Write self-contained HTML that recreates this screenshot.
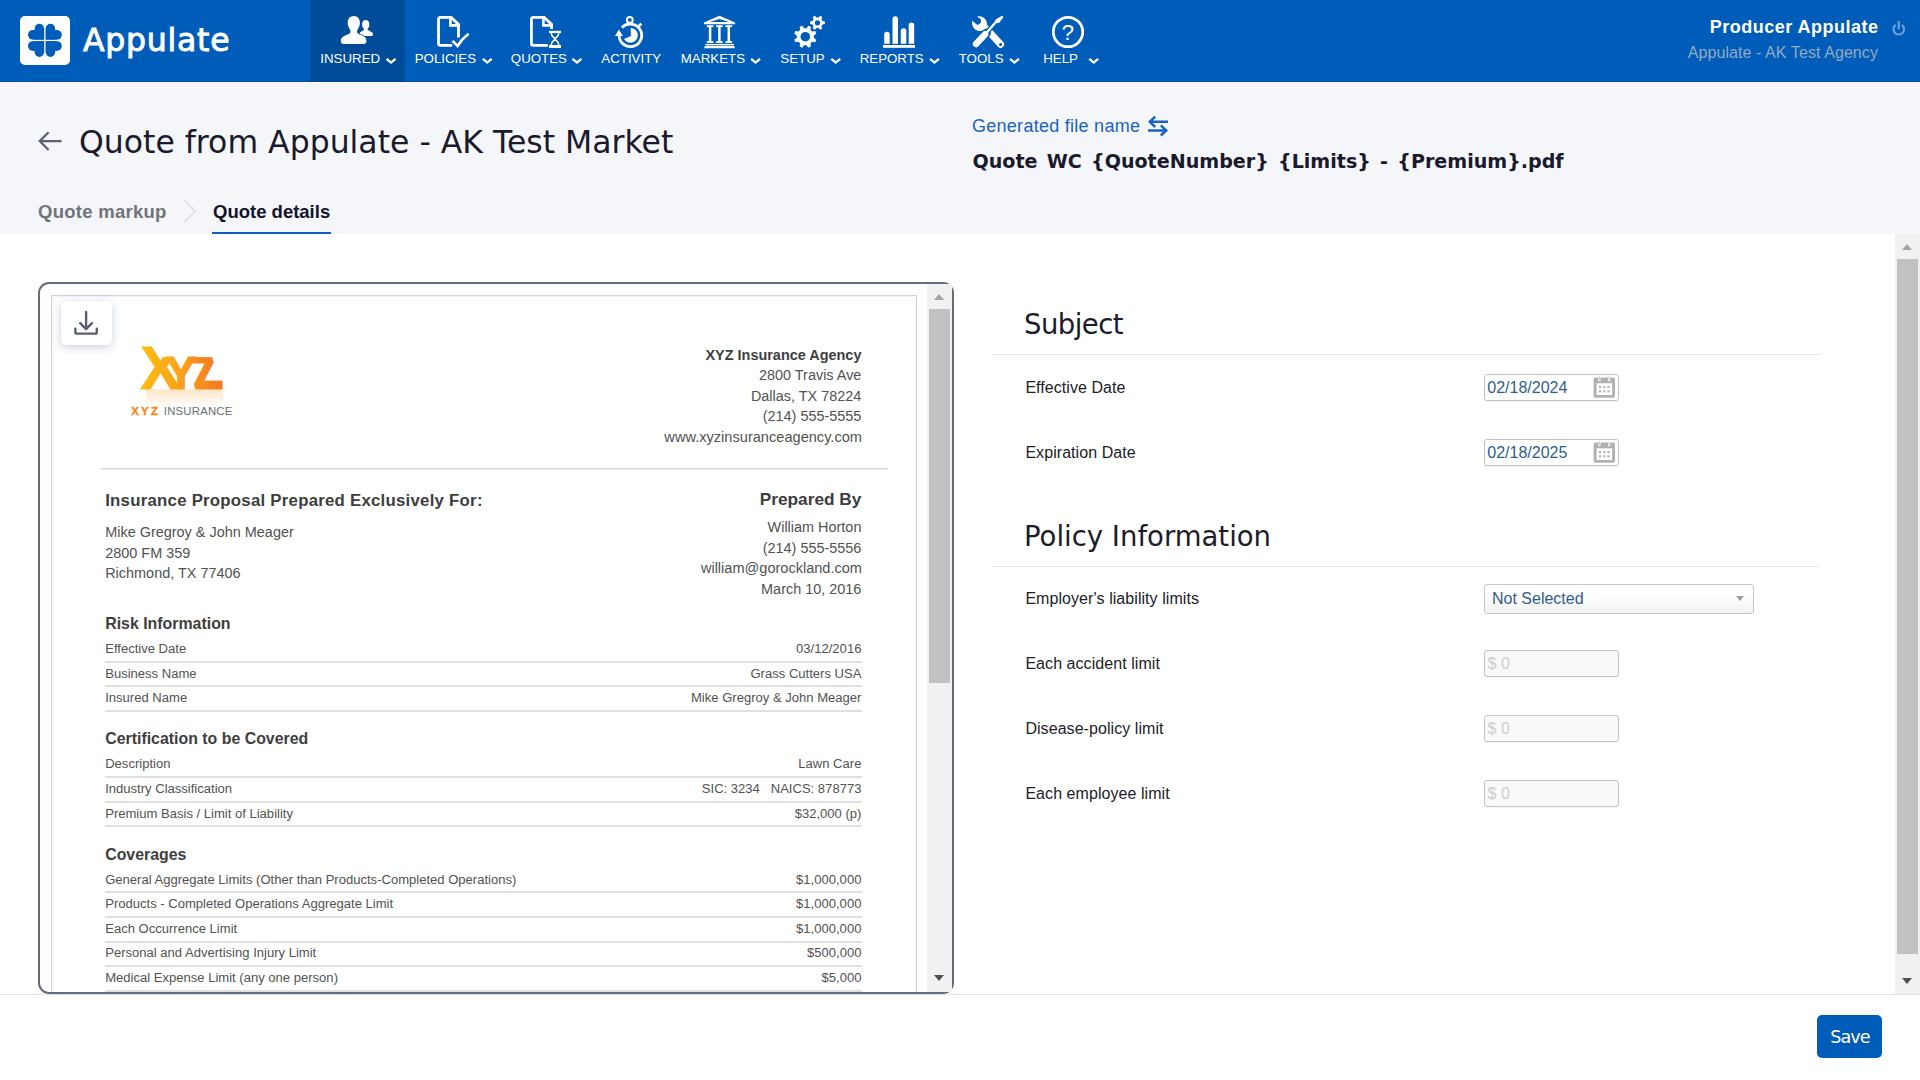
<!DOCTYPE html>
<html lang="en">
<head>
<meta charset="utf-8">
<title>Quote from Appulate - AK Test Market</title>
<style>
*{box-sizing:border-box;margin:0;padding:0}
html,body{width:1920px;height:1080px;overflow:hidden;background:#fff;font-family:"Liberation Sans",sans-serif;color:#1b1b2b}
.abs{position:absolute}
/* ---------- top bar ---------- */
#top{position:absolute;left:0;top:0;width:1920px;height:82px;background:#005cb9;box-shadow:inset 0 -1px 0 rgba(0,40,150,.26)}
#top .act{position:absolute;left:310px;top:0;width:95px;height:82px;background:#004c99}
#logo{position:absolute;left:20px;top:16px;width:50px;height:49px;background:#fff;border-radius:5px}
#brand{position:absolute;left:83px;top:20px;font-family:"DejaVu Sans","Liberation Sans",sans-serif;font-size:31.5px;line-height:40px;color:#fff;letter-spacing:0.75px;-webkit-text-stroke:0.9px #fff;white-space:nowrap}
.nl{position:absolute;top:50.5px;height:16px;line-height:16px;font-size:13.3px;color:#fff;white-space:nowrap}
#uname{position:absolute;right:41.5px;top:16px;font-size:18px;line-height:22px;font-weight:bold;color:#fff;letter-spacing:0.5px;white-space:nowrap}
#uorg{position:absolute;right:42px;top:44px;font-size:16px;line-height:18px;color:#93a9c2;letter-spacing:0.08px;white-space:nowrap}
/* ---------- sub header ---------- */
#sub{position:absolute;left:0;top:82px;width:1920px;height:152px;background:#f5f6fa;border-top:1px solid #fff}
#title{position:absolute;left:79px;top:121px;font-family:"DejaVu Sans","Liberation Sans",sans-serif;font-size:31.5px;line-height:42px;color:#1a1a2c;white-space:nowrap}
.tab{position:absolute;top:200px;font-size:18.5px;line-height:24px;font-weight:bold;white-space:nowrap}
#gfn{position:absolute;left:972px;top:114px;font-size:18px;line-height:24px;color:#1a63c0;letter-spacing:0.27px;white-space:nowrap}
#fname{position:absolute;left:972.5px;top:147px;font-family:"DejaVu Sans","Liberation Sans",sans-serif;font-size:19.1px;line-height:30px;font-weight:bold;color:#1a1a2c;word-spacing:2.6px;white-space:nowrap}
/* ---------- preview panel ---------- */
#panel{position:absolute;left:38px;top:282px;width:916px;height:712px;border:2px solid #616c80;border-radius:11px;background:#fff}
#pclip{position:absolute;left:0;top:0;width:912px;height:708px;overflow:hidden;border-radius:9px}
#page{position:absolute;left:11px;top:11px;width:866px;height:760px;border:1px solid #cbd3e3;background:#fff;box-shadow:inset 1px 1px 0 #f3f3f4,inset -1px 0 0 #f3f3f4}
#dl{position:absolute;left:21px;top:17px;width:51px;height:44px;border-radius:5px;background:#fff;box-shadow:0 2px 10px rgba(90,110,160,.32)}
.t{position:absolute;white-space:nowrap}
.ln{position:absolute;height:1px}
/* ---------- form ---------- */
.h2{position:absolute;left:1024px;font-family:"DejaVu Sans","Liberation Sans",sans-serif;font-size:27.5px;line-height:36px;color:#1c1c2a;white-space:nowrap}
.hr{position:absolute;left:992px;width:827px;height:1px;background:#e3e7f3}
.lbl{position:absolute;left:1025.4px;font-size:16px;line-height:20px;color:#222226;letter-spacing:0.06px;white-space:nowrap}
.inp{position:absolute;left:1484px;width:135px;height:27px;border:1px solid #c2c2c2;border-radius:3px;background:#fff;font-size:16px;line-height:26px;padding-left:2.3px;color:#2f5d8e;white-space:nowrap;box-shadow:0 1px 0 rgba(0,0,0,.04)}
.inp.dis{background:#f9f9f9;color:#cdcdcd;border-color:#c4c4c4;padding-left:2.6px}
.sel{position:absolute;left:1484px;top:584px;width:270px;height:30px;border:1px solid #c6c6c6;border-radius:3px;background:linear-gradient(#fff 35%,#f2f2f2);font-size:16px;line-height:28px;padding-left:7px;color:#2f5d8e;white-space:nowrap}
.sel:after{content:"";position:absolute;left:251px;top:10.6px;border-left:4.8px solid transparent;border-right:4.8px solid transparent;border-top:5px solid #9a9a9a}
.cal{position:absolute;left:1593px;width:23px;height:23px}
.sb{position:absolute;background:#f1f1f1}
.sb i{position:absolute;display:block;background:#c1c1c1}
.sb b{position:absolute;display:block;width:0;height:0;border-left:5.9px solid transparent;border-right:5.9px solid transparent}
/* ---------- footer ---------- */
#foot{position:absolute;left:0;top:994px;width:1920px;height:86px;background:#fff;border-top:1px solid #dfe3f0}
#save{position:absolute;left:1817px;top:1015px;width:65px;height:43px;border-radius:5px;background:#005cb9;color:#fff;font-family:"DejaVu Sans","Liberation Sans",sans-serif;font-size:17.6px;letter-spacing:-0.95px;line-height:44px;text-align:center;padding-left:1px}
</style>
</head>
<body>
<!-- TOPBAR -->
<div id="top">
  <div class="act" style="box-shadow:inset 0 -1px 0 rgba(0,30,120,.3)"></div>
  <div id="logo"></div>
  <div id="brand">Appulate</div>
  <!--NAVSTART-->
<div class="nl" style="left:320.3px">INSURED</div>
<div class="nl" style="left:414.7px">POLICIES</div>
<div class="nl" style="left:510.8px">QUOTES</div>
<div class="nl" style="left:601.3px">ACTIVITY</div>
<div class="nl" style="left:680.8px">MARKETS</div>
<div class="nl" style="left:780.3px">SETUP</div>
<div class="nl" style="left:859.7px">REPORTS</div>
<div class="nl" style="left:958.7px">TOOLS</div>
<div class="nl" style="left:1043.2px">HELP</div>
<svg class="abs" style="left:0;top:0" width="1920" height="82" viewBox="0 0 1920 82" fill="#fff" stroke="none">
<path d="M386.60 58.8 L391.05 62.55 L395.50 58.8" fill="none" stroke="#fff" stroke-width="2.35" stroke-linecap="butt" stroke-linejoin="miter"/>
<path d="M482.80 58.8 L487.25 62.55 L491.70 58.8" fill="none" stroke="#fff" stroke-width="2.35" stroke-linecap="butt" stroke-linejoin="miter"/>
<path d="M572.50 58.8 L576.95 62.55 L581.40 58.8" fill="none" stroke="#fff" stroke-width="2.35" stroke-linecap="butt" stroke-linejoin="miter"/>
<path d="M751.10 58.8 L755.55 62.55 L760.00 58.8" fill="none" stroke="#fff" stroke-width="2.35" stroke-linecap="butt" stroke-linejoin="miter"/>
<path d="M831.30 58.8 L835.75 62.55 L840.20 58.8" fill="none" stroke="#fff" stroke-width="2.35" stroke-linecap="butt" stroke-linejoin="miter"/>
<path d="M930.00 58.8 L934.45 62.55 L938.90 58.8" fill="none" stroke="#fff" stroke-width="2.35" stroke-linecap="butt" stroke-linejoin="miter"/>
<path d="M1010.00 58.8 L1014.45 62.55 L1018.90 58.8" fill="none" stroke="#fff" stroke-width="2.35" stroke-linecap="butt" stroke-linejoin="miter"/>
<path d="M1089.30 58.8 L1093.75 62.55 L1098.20 58.8" fill="none" stroke="#fff" stroke-width="2.35" stroke-linecap="butt" stroke-linejoin="miter"/>
<g transform="translate(44.9 40.4) scale(1 1)" fill="#005cb9"><rect x="-10.2" y="-11.9" width="9.3" height="11.1"/><circle cx="-5.55" cy="-11.9" r="4.65"/><rect x="-12.1" y="-10.4" width="11.2" height="9.6"/><circle cx="-12.1" cy="-5.6" r="4.8"/></g>
<g transform="translate(44.9 40.4) scale(-1 1)" fill="#005cb9"><rect x="-10.2" y="-11.9" width="9.3" height="11.1"/><circle cx="-5.55" cy="-11.9" r="4.65"/><rect x="-12.1" y="-10.4" width="11.2" height="9.6"/><circle cx="-12.1" cy="-5.6" r="4.8"/></g>
<g transform="translate(44.9 40.4) scale(1 -1)" fill="#005cb9"><rect x="-10.2" y="-11.9" width="9.3" height="11.1"/><circle cx="-5.55" cy="-11.9" r="4.65"/><rect x="-12.1" y="-10.4" width="11.2" height="9.6"/><circle cx="-12.1" cy="-5.6" r="4.8"/></g>
<g transform="translate(44.9 40.4) scale(-1 -1)" fill="#005cb9"><rect x="-10.2" y="-11.9" width="9.3" height="11.1"/><circle cx="-5.55" cy="-11.9" r="4.65"/><rect x="-12.1" y="-10.4" width="11.2" height="9.6"/><circle cx="-12.1" cy="-5.6" r="4.8"/></g>
<rect x="44" y="28" width="1.8" height="25" fill="#005cb9" opacity="0.22"/>
<ellipse cx="365.7" cy="24.4" rx="3.6" ry="4.5"/>
<path d="M364 27.5 L367.4 27.5 L367.6 29.6 C369 31 372.8 31.8 373 34 C373.1 35.4 372.4 36.1 371 36.1 L361 36.1 C359.2 35.6 358.6 33.4 360 32.4 C362 31.2 363.6 30.6 364 29.6Z"/>
<path d="M353.8 16 C357.4 16 359.9 18.8 359.9 22.6 C359.9 25.6 358.8 28.4 357.2 30 L357.2 32.2 C357.6 34 361 34.8 363.6 36.2 C365.8 37.4 366.6 39.4 366.4 41.6 C366.3 43.2 365.2 44.1 363.6 44.1 L343.8 44.1 C342 44.1 340.9 43.2 340.8 41.6 C340.6 39.4 341.6 37.4 343.8 36.2 C346.4 34.8 350 34 350.4 32.2 L350.4 30 C348.8 28.4 347.7 25.6 347.7 22.6 C347.7 18.8 350.2 16 353.8 16Z" stroke="#004c99" stroke-width="1.4" paint-order="stroke"/>
<path d="M452.2 45.4 L440.6 45.4 Q438.5 45.4 438.5 43.3 L438.5 19.5 Q438.5 17.4 440.6 17.4 L451.2 17.4 L458.5 24.4 L458.5 37.6" fill="none" stroke="#fff" stroke-width="2.8" stroke-linejoin="miter"/>
<path d="M450.4 17.4 L450.4 25.4 L458.5 25.4" fill="none" stroke="#fff" stroke-width="2.6"/>
<path d="M452.5 40.9 L457.5 45.9 C460.4 41.4 464 37.4 468.6 33.8" fill="none" stroke="#fff" stroke-width="2.7" stroke-linejoin="miter"/>
<path d="M547.8 45.4 L533.5 45.4 Q531.4 45.4 531.4 43.3 L531.4 19.5 Q531.4 17.4 533.5 17.4 L544.2 17.4 L551.6 24.4 L551.6 28.9" fill="none" stroke="#fff" stroke-width="2.8"/>
<path d="M543.4 17.4 L543.4 25.4 L551.6 25.4" fill="none" stroke="#fff" stroke-width="2.6"/>
<rect x="549" y="30.8" width="12" height="2.3"/><rect x="549" y="45" width="12" height="3"/>
<path d="M551.2 33 C551.2 37 555 37.6 555 39 C555 40.4 551.2 41 551.2 45 M558.8 33 C558.8 37 555 37.6 555 39 C555 40.4 558.8 41 558.8 45" fill="none" stroke="#fff" stroke-width="1.5"/>
<path d="M622.00 27.74 A11.3 11.3 0 1 1 619.11 35.69" fill="none" stroke="#fff" stroke-width="2.8"/>
<path d="M618.9 29.4 L615 36 L622.9 36Z"/>
<circle cx="629.8" cy="19.9" r="2.9" fill="none" stroke="#fff" stroke-width="1.9"/>
<path d="M638.9 25.9 L641.4 23.7" stroke="#fff" stroke-width="2.6" fill="none"/>
<path d="M630.90 35.90 L630.66 27.90 A7.4 7.4 0 1 1 623.99 39.00Z"/>
<path d="M719.4 15.8 L735.1 22.6 L735.1 24.2 L703.9 24.2 L703.9 22.6Z M719.4 18.9 L709.6 22 L729.2 22Z" fill-rule="evenodd"/>
<rect x="708.85" y="25.3" width="2.5" height="17.5"/><rect x="706.80" y="25.3" width="6.6" height="1.8"/><rect x="706.80" y="41.1" width="6.6" height="1.8"/>
<rect x="718.15" y="25.3" width="2.5" height="17.5"/><rect x="716.10" y="25.3" width="6.6" height="1.8"/><rect x="716.10" y="41.1" width="6.6" height="1.8"/>
<rect x="727.55" y="25.3" width="2.5" height="17.5"/><rect x="725.50" y="25.3" width="6.6" height="1.8"/><rect x="725.50" y="41.1" width="6.6" height="1.8"/>
<rect x="705.3" y="43.9" width="28.6" height="1.5"/><path d="M705 46.1 L734 46.1 L735.1 48.2 L703.9 48.2Z"/>
<path d="M813.81 37.96 L816.30 39.71 L815.20 42.35 L812.21 41.82 L810.42 43.61 L810.95 46.60 L808.31 47.70 L806.56 45.21 L804.04 45.21 L802.29 47.70 L799.65 46.60 L800.18 43.61 L798.39 41.82 L795.40 42.35 L794.30 39.71 L796.79 37.96 L796.79 35.44 L794.30 33.69 L795.40 31.05 L798.39 31.58 L800.18 29.79 L799.65 26.80 L802.29 25.70 L804.04 28.19 L806.56 28.19 L808.31 25.70 L810.95 26.80 L810.42 29.79 L812.21 31.58 L815.20 31.05 L816.30 33.69 L813.81 35.44Z M800.50 36.70 a4.8 4.8 0 1 0 9.6 0 a4.8 4.8 0 1 0 -9.6 0Z" fill-rule="evenodd"/>
<path d="M822.52 21.10 L824.89 21.55 L824.89 24.05 L822.52 24.50 L821.48 26.29 L822.28 28.58 L820.11 29.83 L818.53 28.00 L816.47 28.00 L814.89 29.83 L812.72 28.58 L813.52 26.29 L812.48 24.50 L810.11 24.05 L810.11 21.55 L812.48 21.10 L813.52 19.31 L812.72 17.02 L814.89 15.77 L816.47 17.60 L818.53 17.60 L820.11 15.77 L822.28 17.02 L821.48 19.31Z M814.90 22.80 a2.6 2.6 0 1 0 5.2 0 a2.6 2.6 0 1 0 -5.2 0Z" fill-rule="evenodd"/>
<path d="M884.2 43.7 L884.2 34.4 A2.75 2.75 0 0 1 889.7 34.4 L889.7 43.7Z"/>
<path d="M892.5 43.7 L892.5 18.9 A2.75 2.75 0 0 1 898.0 18.9 L898.0 43.7Z"/>
<path d="M900.8 43.7 L900.8 31.0 A2.75 2.75 0 0 1 906.3 31.0 L906.3 43.7Z"/>
<path d="M908.7 43.7 L908.7 25.2 A2.75 2.75 0 0 1 914.2 25.2 L914.2 43.7Z"/>
<rect x="883" y="45" width="32" height="2.8"/>
<path d="M986.6 29 L1000.6 44.4" stroke="#fff" stroke-width="7" stroke-linecap="round" fill="none"/>
<circle cx="1000.6" cy="44.5" r="1.6" fill="#005cb9"/>
<path d="M977.2 16.6 C981.6 15.2 986.4 18.4 987 23.4 C987.4 27 985.6 29.6 982.8 30.6 C978.4 32.2 973.4 29.6 972.3 25 C971.9 23.4 972 22 972.4 20.8 L976.6 24.6 C978.6 25.2 980.6 23.6 981 21.4 C981.2 20.2 980.8 19.4 980.2 18.8 Z"/>
<path d="M996.6 21.2 L986 33.4" stroke="#005cb9" stroke-width="5" fill="none"/>
<path d="M986.4 33 L976 44" stroke="#005cb9" stroke-width="9" stroke-linecap="round" fill="none"/>
<path d="M997 20.8 L984.6 35" stroke="#fff" stroke-width="2.3" fill="none"/>
<path d="M1003.5 17 L1001.7 15.7 L995.8 19.4 L995.2 21.2 L997.4 23.2 L999.2 22.8 Z"/>
<path d="M985.2 34.2 L976 44" stroke="#fff" stroke-width="6.4" stroke-linecap="round" fill="none"/>
<circle cx="1068" cy="32" r="14.7" fill="none" stroke="#fff" stroke-width="2.8"/>
<text x="1067.8" y="40" font-family="Liberation Sans, sans-serif" font-size="22.6" text-anchor="middle" fill="#fff">?</text>
<path d="M1895.1 25.5 A5.25 5.25 0 1 0 1902.4 25.5" fill="none" stroke="#6b9fda" stroke-width="2.2" stroke-linecap="round"/><path d="M1898.75 21.8 L1898.75 28.6" stroke="#6b9fda" stroke-width="2.2" stroke-linecap="round" fill="none"/>
</svg>
<!--NAVEND-->
  <div id="uname">Producer Appulate</div>
  <div id="uorg">Appulate - AK Test Agency</div>
</div>
<!-- SUBHEADER -->
<div id="sub"></div>
<div id="title">Quote from Appulate - AK Test Market</div>
<div class="tab" style="left:38px;color:#707479;letter-spacing:0.27px">Quote markup</div>
<div class="tab" style="left:213px;color:#14142a">Quote details</div>
<div class="abs" style="left:212px;top:232px;width:119px;height:2px;background:#0f5cc0"></div>
<div id="gfn">Generated file name</div>
<div id="fname">Quote WC {QuoteNumber} {Limits} - {Premium}.pdf</div>
<!--SUBICONS-->
<svg class="abs" style="left:0;top:82px" width="1920" height="152" viewBox="0 82 1920 152" fill="none">
<path d="M61.6 141.1 H40 M48.6 132.2 L39.7 141.1 L48.6 150" stroke="#5b6172" stroke-width="2.2" stroke-linejoin="miter"/>
<path d="M184.6 200.6 L195.2 211.2 L184.6 221.8" stroke="#dfe0e5" stroke-width="1.7"/>
<path d="M1168 121.8 H1150 M1155.2 116.6 L1149.8 121.8 L1155.2 127" stroke="#1a63c0" stroke-width="2.5"/>
<path d="M1148 130.4 H1166 M1160.8 125.3 L1166.2 130.4 L1160.8 135.5" stroke="#1a63c0" stroke-width="2.5"/>
</svg>
<!-- PANEL -->
<div id="panel">
<div id="pclip">
  <div id="page"></div>
<!--LOGOSTART-->
<svg class="abs" style="left:0;top:0;overflow:visible" width="912" height="708" viewBox="40 284 912 708">
<defs><linearGradient id="og" gradientUnits="userSpaceOnUse" x1="142" y1="0" x2="223" y2="0"><stop offset="0" stop-color="#fdbb12"/><stop offset=".5" stop-color="#f9a11c"/><stop offset="1" stop-color="#f47a20"/></linearGradient>
<linearGradient id="ogz" gradientUnits="userSpaceOnUse" x1="-52.6" y1="0" x2="28.4" y2="0"><stop offset="0" stop-color="#fdbb12"/><stop offset=".5" stop-color="#f9a11c"/><stop offset="1" stop-color="#f47a20"/></linearGradient>
<clipPath id="xc"><path d="M130 340 L163 340 L163 357.3 L190 357.3 L190 395 L130 395Z"/></clipPath>
<linearGradient id="rg" gradientUnits="userSpaceOnUse" x1="0" y1="389" x2="0" y2="407"><stop offset="0" stop-color="#fbb45a" stop-opacity=".34"/><stop offset="1" stop-color="#fbb45a" stop-opacity="0"/></linearGradient></defs>
<g font-family="Liberation Sans, sans-serif" font-weight="bold" fill="url(#og)" stroke="url(#og)" stroke-width="1.2">
<text x="140.6" y="388.7" font-size="60.4" textLength="40" lengthAdjust="spacingAndGlyphs" clip-path="url(#xc)">X</text>
<text x="165.8" y="388.7" font-size="45.3" textLength="30.5" lengthAdjust="spacingAndGlyphs">Y</text>
<text transform="translate(194.6 388.7) skewX(16)" font-size="45.3" textLength="28.5" lengthAdjust="spacingAndGlyphs" fill="url(#ogz)" stroke="url(#ogz)">Z</text>
</g>
<rect x="196" y="380.6" width="26.6" height="8.2" fill="url(#og)"/>
<rect x="146" y="389.4" width="77" height="18" fill="url(#rg)"/>
<text x="131.2" y="415.3" font-family="Liberation Sans, sans-serif" font-size="11.4" font-weight="bold" fill="#f28b1f" stroke="#f28b1f" stroke-width="0.45" letter-spacing="2.3">XYZ</text>
<text x="163.8" y="415.3" font-family="Liberation Sans, sans-serif" font-size="11.4" fill="#6d6e71" letter-spacing="0.18">INSURANCE</text>
</svg>
<!--LOGOEND-->
<!--DOCSTART-->
<div class="t" style="top:60.59px;font-size:14.45px;line-height:20px;color:#3e3e3e;font-weight:bold;right:90.60px;">XYZ Insurance Agency</div>
<div class="t" style="top:81.49px;font-size:14.45px;line-height:20px;color:#525252;right:90.60px;">2800 Travis Ave</div>
<div class="t" style="top:101.59px;font-size:14.45px;line-height:20px;color:#525252;right:90.60px;">Dallas, TX 78224</div>
<div class="t" style="top:122.29px;font-size:14.45px;line-height:20px;color:#525252;right:90.60px;">(214) 555-5555</div>
<div class="t" style="top:143.24px;font-size:14.6px;line-height:20px;color:#525252;right:90.00px;">www.xyzinsuranceagency.com</div>
<div class="ln" style="left:61.0px;top:184.0px;width:786.6px;height:2px;background:linear-gradient(#d9d9d9 50%,#e8e8e8 50%)"></div>
<div class="t" style="top:205.18px;font-size:16.8px;line-height:24px;color:#3e3e3e;font-weight:bold;letter-spacing:0.25px;left:65.20px;">Insurance Proposal Prepared Exclusively For:</div>
<div class="t" style="top:203.02px;font-size:17.27px;line-height:24px;color:#3e3e3e;font-weight:bold;right:90.60px;">Prepared By</div>
<div class="t" style="top:237.99px;font-size:14.45px;line-height:20px;color:#525252;left:65.20px;">Mike Gregroy &amp; John Meager</div>
<div class="t" style="top:258.59px;font-size:14.45px;line-height:20px;color:#525252;left:65.20px;">2800 FM 359</div>
<div class="t" style="top:279.19px;font-size:14.45px;line-height:20px;color:#525252;left:65.20px;">Richmond, TX 77406</div>
<div class="t" style="top:232.99px;font-size:14.45px;line-height:20px;color:#525252;right:90.60px;">William Horton</div>
<div class="t" style="top:253.59px;font-size:14.45px;line-height:20px;color:#525252;right:90.60px;">(214) 555-5556</div>
<div class="t" style="top:274.46px;font-size:14.55px;line-height:20px;color:#525252;right:90.00px;">william@gorockland.com</div>
<div class="t" style="top:294.79px;font-size:14.45px;line-height:20px;color:#525252;right:90.60px;">March 10, 2016</div>
<div class="t" style="top:329.09px;font-size:15.9px;line-height:22px;color:#3e3e3e;font-weight:bold;left:65.20px;">Risk Information</div>
<div class="t" style="top:356.28px;font-size:13.05px;line-height:18px;color:#525252;left:65.20px;">Effective Date</div>
<div class="t" style="top:356.28px;font-size:13.05px;line-height:18px;color:#525252;right:90.60px;">03/12/2016</div>
<div class="ln" style="left:64.8px;top:377.0px;width:757.7px;height:2px;background:#e0e0e1"></div>
<div class="t" style="top:380.68px;font-size:13.05px;line-height:18px;color:#525252;left:65.20px;">Business Name</div>
<div class="t" style="top:380.68px;font-size:13.05px;line-height:18px;color:#525252;right:90.60px;">Grass Cutters USA</div>
<div class="ln" style="left:64.8px;top:401.4px;width:757.7px;height:2px;background:#e0e0e1"></div>
<div class="t" style="top:405.08px;font-size:13.05px;line-height:18px;color:#525252;left:65.20px;">Insured Name</div>
<div class="t" style="top:405.08px;font-size:13.05px;line-height:18px;color:#525252;right:90.60px;">Mike Gregroy &amp; John Meager</div>
<div class="ln" style="left:64.8px;top:426.0px;width:757.7px;height:2px;background:#e0e0e1"></div>
<div class="t" style="top:444.09px;font-size:15.9px;line-height:22px;color:#3e3e3e;font-weight:bold;left:65.20px;">Certification to be Covered</div>
<div class="t" style="top:471.08px;font-size:13.05px;line-height:18px;color:#525252;left:65.20px;">Description</div>
<div class="t" style="top:471.08px;font-size:13.05px;line-height:18px;color:#525252;right:90.60px;">Lawn Care</div>
<div class="ln" style="left:64.8px;top:492.0px;width:757.7px;height:2px;background:#e0e0e1"></div>
<div class="t" style="top:496.08px;font-size:13.05px;line-height:18px;color:#525252;left:65.20px;">Industry Classification</div>
<div class="t" style="top:496.08px;font-size:13.05px;line-height:18px;color:#525252;right:90.60px;">SIC: 3234 &nbsp; NAICS: 878773</div>
<div class="ln" style="left:64.8px;top:516.6px;width:757.7px;height:2px;background:#e0e0e1"></div>
<div class="t" style="top:520.88px;font-size:13.05px;line-height:18px;color:#525252;left:65.20px;">Premium Basis / Limit of Liability</div>
<div class="t" style="top:520.88px;font-size:13.05px;line-height:18px;color:#525252;right:90.60px;">$32,000 (p)</div>
<div class="ln" style="left:64.8px;top:541.2px;width:757.7px;height:2px;background:#e0e0e1"></div>
<div class="t" style="top:559.69px;font-size:15.9px;line-height:22px;color:#3e3e3e;font-weight:bold;left:65.20px;">Coverages</div>
<div class="t" style="top:587.08px;font-size:13.05px;line-height:18px;color:#525252;left:65.20px;">General Aggregate Limits (Other than Products-Completed Operations)</div>
<div class="t" style="top:587.08px;font-size:13.05px;line-height:18px;color:#525252;right:90.60px;">$1,000,000</div>
<div class="ln" style="left:64.8px;top:607.0px;width:757.7px;height:2px;background:#e0e0e1"></div>
<div class="t" style="top:611.28px;font-size:13.05px;line-height:18px;color:#525252;left:65.20px;">Products - Completed Operations Aggregate Limit</div>
<div class="t" style="top:611.28px;font-size:13.05px;line-height:18px;color:#525252;right:90.60px;">$1,000,000</div>
<div class="ln" style="left:64.8px;top:632.0px;width:757.7px;height:2px;background:#e0e0e1"></div>
<div class="t" style="top:635.78px;font-size:13.05px;line-height:18px;color:#525252;left:65.20px;">Each Occurrence Limit</div>
<div class="t" style="top:635.78px;font-size:13.05px;line-height:18px;color:#525252;right:90.60px;">$1,000,000</div>
<div class="ln" style="left:64.8px;top:656.6px;width:757.7px;height:2px;background:#e0e0e1"></div>
<div class="t" style="top:660.28px;font-size:13.05px;line-height:18px;color:#525252;left:65.20px;">Personal and Advertising Injury Limit</div>
<div class="t" style="top:660.28px;font-size:13.05px;line-height:18px;color:#525252;right:90.60px;">$500,000</div>
<div class="ln" style="left:64.8px;top:681.2px;width:757.7px;height:2px;background:#e0e0e1"></div>
<div class="t" style="top:684.98px;font-size:13.05px;line-height:18px;color:#525252;left:65.20px;">Medical Expense Limit (any one person)</div>
<div class="t" style="top:684.98px;font-size:13.05px;line-height:18px;color:#525252;right:90.60px;">$5,000</div>
<div class="ln" style="left:64.8px;top:706.2px;width:757.7px;height:2px;background:#e0e0e1"></div>
<!--DOCEND-->
  <div id="dl"><svg width="51" height="44" viewBox="61 301 51 44" fill="none" stroke="#566072" stroke-width="2.4" stroke-linecap="round" stroke-linejoin="round"><path d="M86.1 312 V328.6 M80.2 323.2 L86.1 329.2 L92 323.2"/><path d="M75.4 328.6 V332.2 Q75.4 333.6 76.8 333.6 H95.4 Q96.8 333.6 96.8 332.2 V328.6"/></svg></div>
</div>
  <div class="sb" style="left:887px;top:0;width:25px;height:708px"><b style="left:6.6px;top:9.8px;border-bottom:6.2px solid #a3a3a3"></b><i style="left:2px;top:25px;width:21px;height:373.5px"></i><b style="left:6.6px;top:691.4px;border-top:6.2px solid #505050"></b></div>
</div>
<!-- FORM -->
<!--FORMSTART-->
<div class="h2" style="top:306px;letter-spacing:-0.55px">Subject</div>
<div class="hr" style="top:354px"></div>
<div class="lbl" style="top:378px">Effective Date</div>
<div class="inp" style="top:374px">02/18/2024</div>
<svg class="cal" style="top:376px" viewBox="0 0 23 23"><path d="M2.4 1.6 H20 Q22 1.6 22 3.6 V19.6 Q22 21.8 20 21.8 H2.4 Q0.6 21.8 0.6 19.6 V3.6 Q0.6 1.6 2.4 1.6Z M3.6 7.2 V18.9 H19.2 V7.2Z" fill="#b1b1b1" fill-rule="evenodd"/><rect x="5.2" y="0" width="2.3" height="5.2" rx="0.6" fill="#fff"/><rect x="15" y="0" width="2.3" height="5.2" rx="0.6" fill="#fff"/><rect x="5.9" y="0.4" width="0.9" height="4" fill="#b9b9b9"/><rect x="15.7" y="0.4" width="0.9" height="4" fill="#b9b9b9"/><g fill="#b4b4b4"><rect x="6" y="10" width="2.2" height="2.2"/><rect x="10.2" y="10" width="2.2" height="2.2"/><rect x="14.4" y="10" width="2.2" height="2.2"/><rect x="6" y="14.2" width="2.2" height="2.2"/><rect x="10.2" y="14.2" width="2.2" height="2.2"/><rect x="14.4" y="14.2" width="2.2" height="2.2"/></g></svg>
<div class="lbl" style="top:443px">Expiration Date</div>
<div class="inp" style="top:439px">02/18/2025</div>
<svg class="cal" style="top:441px" viewBox="0 0 23 23"><path d="M2.4 1.6 H20 Q22 1.6 22 3.6 V19.6 Q22 21.8 20 21.8 H2.4 Q0.6 21.8 0.6 19.6 V3.6 Q0.6 1.6 2.4 1.6Z M3.6 7.2 V18.9 H19.2 V7.2Z" fill="#b1b1b1" fill-rule="evenodd"/><rect x="5.2" y="0" width="2.3" height="5.2" rx="0.6" fill="#fff"/><rect x="15" y="0" width="2.3" height="5.2" rx="0.6" fill="#fff"/><rect x="5.9" y="0.4" width="0.9" height="4" fill="#b9b9b9"/><rect x="15.7" y="0.4" width="0.9" height="4" fill="#b9b9b9"/><g fill="#b4b4b4"><rect x="6" y="10" width="2.2" height="2.2"/><rect x="10.2" y="10" width="2.2" height="2.2"/><rect x="14.4" y="10" width="2.2" height="2.2"/><rect x="6" y="14.2" width="2.2" height="2.2"/><rect x="10.2" y="14.2" width="2.2" height="2.2"/><rect x="14.4" y="14.2" width="2.2" height="2.2"/></g></svg>
<div class="h2" style="top:518px">Policy Information</div>
<div class="hr" style="top:566px"></div>
<div class="lbl" style="top:589px">Employer's liability limits</div>
<div class="sel">Not Selected</div>
<div class="lbl" style="top:654px">Each accident limit</div>
<div class="inp dis" style="top:650px">$ 0</div>
<div class="lbl" style="top:719px">Disease-policy limit</div>
<div class="inp dis" style="top:715px">$ 0</div>
<div class="lbl" style="top:784px">Each employee limit</div>
<div class="inp dis" style="top:780px">$ 0</div>
<!--FORMEND-->
<!--MSCROLL-->
<div class="sb" style="left:1895px;top:234px;width:25px;height:760px"><b style="left:6.6px;top:9.6px;border-bottom:6.2px solid #a3a3a3"></b><i style="left:2px;top:25px;width:21px;height:695px"></i><b style="left:6.6px;top:744px;border-top:6.2px solid #505050"></b></div>
<!-- FOOTER -->
<div id="foot"></div>
<div id="save">Save</div>
</body>
</html>
